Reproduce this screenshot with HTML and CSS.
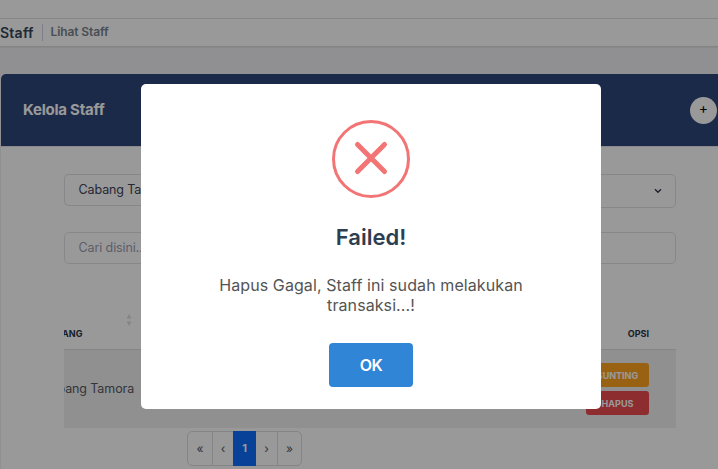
FILE: index.html
```html
<!DOCTYPE html>
<html lang="id">
<head>
<meta charset="utf-8">
<title>Kelola Staff</title>
<link rel="stylesheet" href="styles.css">
</head>
<body>
<div class="page">
  <header class="topbar"></header>
  <nav class="subheader">
    <span class="crumb-title">Staff</span>
    <span class="crumb-sub">Lihat Staff</span>
  </nav>
  <main class="card">
    <div class="card-header">
      <h3>Kelola Staff</h3>
      <button class="add">+</button>
    </div>
    <div class="card-body">
      <div class="filters">
        <div class="control branch">Cabang Tamora</div>
        <div class="control status">
          <svg width="8" height="6" viewBox="0 0 8 6"><path d="M1 1.2 4 4.2 7 1.2"/></svg>
        </div>
      </div>
      <div class="control search">Cari disini...</div>
      <div class="table">
        <div class="row head">
          <div class="cell branch-cell"><span>CABANG</span>
            <svg class="sort" width="6" height="12" viewBox="0 0 6 12"><path d="M3 0 5.500 4.500H.5zM3 12 .5 7.500h5z"/></svg>
          </div>
          <div class="cell option-cell">OPSI</div>
        </div>
        <div class="row data">
          <div class="cell branch-cell">Cabang Tamora</div>
          <div class="cell actions">
            <button class="action edit">SUNTING</button>
            <button class="action delete">HAPUS</button>
          </div>
        </div>
      </div>
      <div class="pagination">
        <span>«</span><span>‹</span><span class="active">1</span><span>›</span><span>»</span>
      </div>
    </div>
  </main>
</div>
<div class="overlay">
  <section class="modal">
    <svg class="icon" width="78" height="78" viewBox="0 0 78 78"><circle cx="39" cy="39" r="37.500"/><path d="M25.500 24.500 52.500 51.500M52.500 24.500 25.500 51.500"/></svg>
    <h2>Failed!</h2>
    <p>Hapus Gagal, Staff ini sudah melakukan transaksi...!</p>
    <button class="ok">OK</button>
  </section>
</div>
</body>
</html>
```
FILE: styles.css
```css
* { box-sizing: border-box; }
body { margin: 0; font-family: Inter, sans-serif; font-size: 12.5px; color: #3f4254; overflow: hidden; }
button { border: 0; padding: 0; font-family: inherit; }
h2, h3, p { margin: 0; }
.page { width: 718px; height: 469px; overflow: hidden; background: #f0f0f4; }
.topbar { height: 19px; background: #fff; border-bottom: 1px solid #e2e2e2; }
.subheader { display: flex; align-items: flex-start; height: 28px; background: #fff; border-bottom: 1px solid #dcdcdc; box-shadow: 0 1px 1px #e4e4e8; }
.crumb-title { width: 43px; height: 17px; margin-top: 5px; border-right: 1px solid #d5d2e3; font-size: 14px; font-weight: 600; line-height: 18px; letter-spacing: .25px; color: #35465a; }
.crumb-sub { margin: 5px 0 0 7.500px; font-size: 12px; font-weight: 600; line-height: 16px; letter-spacing: -.1px; color: #79828c; }
.card { width: 740px; height: 420px; margin: 27px 0 0 1px; background: #fff; border-radius: 5px; }
.card-header { display: flex; align-items: center; justify-content: space-between; height: 73px; padding: 0 24px 0 22px; border-radius: 5px 0 0; border-bottom: 1px solid #e5e5ec; background: #2e477b; background-clip: padding-box; }
.card-header h3 { font-size: 15px; font-weight: 700; line-height: 22px; color: #fff; letter-spacing: -.23px; }
.add { width: 27px; height: 27px; border-radius: 50%; background: #fff; color: #000; font-size: 14px; line-height: 22px; padding-bottom: 5px; }
.card-body { width: 612px; margin: 27px 0 0 63px; }
.filters { display: flex; align-items: flex-start; height: 58px; }
.control { height: 32px; border: 1px solid #e2e2e6; padding: 0 13.500px; line-height: 30px; letter-spacing: -.1px; }
.branch { width: 306px; border-radius: 5px 0 0 5px; border-right: 0; }
.status { display: flex; align-items: center; justify-content: flex-end; width: 306px; height: 34px; border-radius: 0 5px 5px 0; border-left: 0; }
.status svg { fill: none; stroke: #34374d; stroke-width: 1.4; }
.search { border-radius: 5px; color: #9a9db0; }
.table { height: 164px; overflow: hidden; }
.row { display: flex; justify-content: space-between; }
.head { height: 86px; border-bottom: 1px solid #dedee2; font-size: 9px; font-weight: 700; line-height: 12px; color: #283548; }
.head .cell { padding-top: 64px; }
.branch-cell { display: flex; margin-left: -21px; white-space: nowrap; }
.head .sort { margin: -14px 0 0 44px; fill: #dedede; }
.head .option-cell { padding-right: 27px; }
.data { height: 78px; align-items: center; background: #f1f1f1; }
.data .branch-cell { margin-left: -22.500px; padding-bottom: 1px; letter-spacing: -.1px; color: #575962; }
.actions { display: flex; flex-direction: column; gap: 4px; padding-right: 27px; }
.action { width: 63px; height: 24px; border-radius: 3px; font-size: 9px; font-weight: 700; color: #fff; }
.edit { background: #ffa21f; }
.delete { background: #ec4c50; }
.pagination { display: flex; width: 115px; height: 35px; margin: 3px 0 0 123px; border: 1px solid #dedede; border-radius: 5px; }
.pagination span { flex: 0 0 25px; border-right: 1px solid #dedede; text-align: center; font-size: 12px; line-height: 33px; color: #575962; }
.pagination span:nth-child(2) { flex-basis: 20px; border: 0; }
.pagination .active { flex-basis: 23px; height: 35px; margin-top: -1px; border: 0; background: #0d6efd; color: #fff; font-size: 11px; font-weight: 700; line-height: 35px; }
.pagination span:nth-child(4) { flex-basis: 22px; }
.pagination span:last-child { flex-basis: 23px; border: 0; }
.overlay { position: fixed; inset: 0; background: rgba(0, 0, 0, .4); padding: 84px 0 0 141px; }
.modal { display: flex; flex-direction: column; align-items: center; width: 460px; height: 325px; padding-top: 36px; border-radius: 5px; background: #fff; text-align: center; }
.icon { fill: none; stroke: #f27474; stroke-width: 3; }
.icon path { stroke-width: 5; stroke-linecap: round; }
.modal h2 { margin-top: 26px; font-size: 22px; font-weight: 600; line-height: 27px; color: #2c3e50; }
.modal p { width: 380px; margin-top: 24px; font-size: 16px; line-height: 20px; letter-spacing: .09px; color: #545454; }
.ok { width: 84px; height: 44px; margin-top: 28px; padding-bottom: 1px; border-radius: 4px; background: #3085d6; color: #fff; font-size: 16px; font-weight: 600; letter-spacing: -.6px; }
```
